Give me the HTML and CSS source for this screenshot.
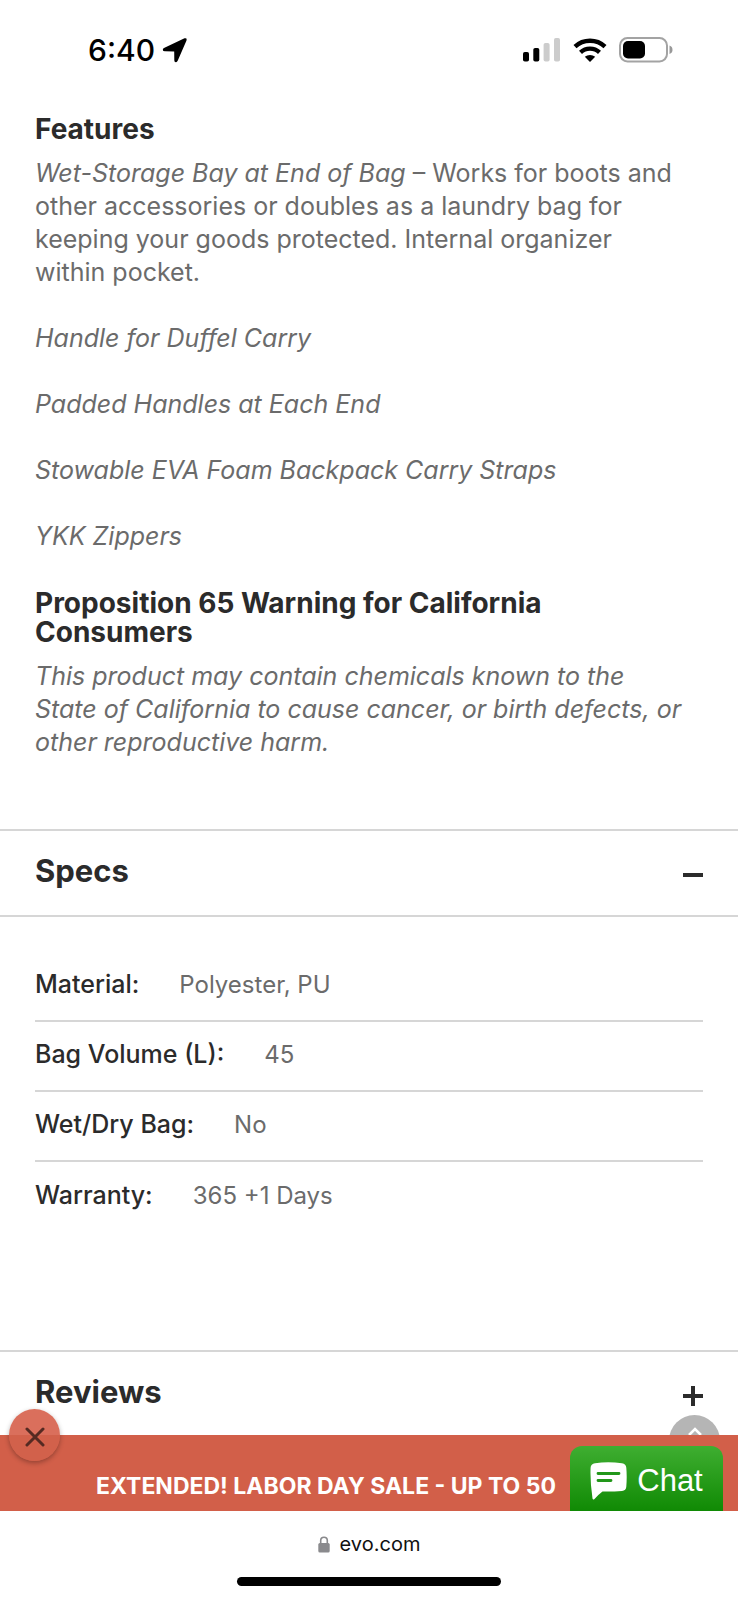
FILE: index.html
```html
<!DOCTYPE html>
<html lang="en">
<head>
    <meta charset="UTF-8">
    <meta name="viewport" content="width=device-width, initial-scale=1.0">
    <title>evo.com</title>
    <link rel="stylesheet" href="styles.css">
</head>
<body>

<header class="status-bar">
    <div class="status-time">
        <span>6:40</span>
        <svg width="26" height="26" viewBox="0 0 26 26"><path d="M2.500 10.800 22.500 1.300q3-.8 2 2.200L15.800 23.500q-.8 2-2 1.800-1.500 0-1.500-2L12.200 14.500 3 14.300q-2.200 0-2.200-1.500 0-1.300 1.700-2z"/></svg>
    </div>
    <div class="status-icons">
        <svg width="38" height="24" viewBox="0 0 38 24">
            <rect x="0" y="14" width="6" height="9.500" rx="1.800"/>
            <rect x="10.300" y="10" width="6" height="13.500" rx="1.800"/>
            <rect x="20.600" y="5" width="6" height="18.500" rx="1.800" fill="#ccc"/>
            <rect x="31" y="0" width="6" height="23.500" rx="1.800" fill="#ccc"/>
        </svg>
        <svg width="34" height="24" viewBox="0 0 34 24">
            <path d="M2 8.600a22 22 0 0 1 30 0M7.500 14.300a14 14 0 0 1 19 0" fill="none" stroke="#000" stroke-width="4.400"/>
            <path d="M17 24l-5.200-5.200a8 8 0 0 1 10.400 0z"/>
        </svg>
        <svg width="54" height="26" viewBox="0 0 54 26">
            <rect x="1" y="1" width="47" height="23.500" rx="7.500" fill="none" stroke="#a3a3a3" stroke-width="2"/>
            <rect x="4" y="4" width="22" height="17.500" rx="5"/>
            <path d="M50.500 8.500q3 1 3 4.200t-3 4.200z" fill="#999"/>
        </svg>
    </div>
</header>

<main>
    <section class="details">
        <h3>Features</h3>
        <p><em>Wet-Storage Bay at End of Bag</em> – Works for boots and<br>other accessories or doubles as a laundry bag for<br>keeping your goods protected. Internal organizer<br>within pocket.</p>
        <p><em>Handle for Duffel Carry</em></p>
        <p><em>Padded Handles at Each End</em></p>
        <p><em>Stowable EVA Foam Backpack Carry Straps</em></p>
        <p><em>YKK Zippers</em></p>
        <h3>Proposition 65 Warning for California<br>Consumers</h3>
        <p><em>This product may contain chemicals known to the<br>State of California to cause cancer, or birth defects, or<br>other reproductive harm.</em></p>
    </section>

    <section>
        <h2 class="accordion">
            <button type="button" aria-expanded="true">
                <span>Specs</span>
                <svg class="toggle" width="20" height="20" viewBox="0 0 20 20"><path d="M0 10h20"/></svg>
            </button>
        </h2>
        <table class="specs">
            <tbody>
                <tr><th scope="row">Material:</th><td>Polyester, PU</td></tr>
                <tr><th scope="row">Bag Volume (L):</th><td>45</td></tr>
                <tr><th scope="row">Wet/Dry Bag:</th><td>No</td></tr>
                <tr><th scope="row">Warranty:</th><td>365 +1 Days</td></tr>
            </tbody>
        </table>
    </section>

    <section>
        <h2 class="accordion reviews">
            <button type="button" aria-expanded="false">
                <span>Reviews</span>
                <svg class="toggle" width="20" height="20" viewBox="0 0 20 20"><path d="M0 10h20M10 0v20"/></svg>
            </button>
        </h2>
    </section>
</main>

<div class="bottom">
    <button type="button" class="to-top" aria-label="Back to top">
        <svg width="16" height="10" viewBox="0 0 16 10"><path d="M2 8l6-6 6 6" fill="none" stroke="#fff" stroke-width="2.500"/></svg>
    </button>
    <div class="banner">
        <a href="#sale">EXTENDED! LABOR DAY SALE - UP TO 50</a>
        <button type="button" class="close" aria-label="Close">
            <svg width="20" height="20" viewBox="0 0 20 20"><path d="M2 2l16 16M18 2L2 18" stroke="#552a22" stroke-width="3" stroke-linecap="round"/></svg>
        </button>
        <button type="button" class="chat">
            <svg width="37" height="38" viewBox="0 0 37 38">
                <path d="M5 1.200Q18-.6 32 1.200q4 .5 4.300 4.500.8 9 0 19-.3 3.800-4.300 4.200-9 .8-19.500.6Q9 32 4.500 37q-1.500 1.300-2-.6Q0 20 .6 5.700.8 1.700 5 1.200z" fill="#fff"/>
                <path d="M8 11.500h21M8 18.500h13" stroke="#22971a" stroke-width="2.800" stroke-linecap="round"/>
            </svg>
            <span>Chat</span>
        </button>
    </div>
    <footer class="browser-bar">
        <div class="address">
            <svg width="12" height="17" viewBox="0 0 12 17">
                <path d="M2.700 8V4.500a3.300 3.300 0 0 1 6.600 0V8" fill="none" stroke="#8a8a8d" stroke-width="1.600"/>
                <rect x=".3" y="7" width="11.400" height="9.500" rx="1.500" fill="#8a8a8d"/>
            </svg>
            <span>evo.com</span>
        </div>
        <div class="home-bar"></div>
    </footer>
</div>

</body>
</html>
```
FILE: styles.css
```css
* {
    box-sizing: border-box;
}
body {
    margin: 0;
    background-color: #fff;
    color: #6b6b6b;
    font-family: Inter, "Liberation Sans", sans-serif;
    font-size: 25px;
    line-height: 33px;
}
button {
    border: none;
    padding: 0;
    background: none;
    color: inherit;
    font: inherit;
    cursor: pointer;
}
svg {
    display: block;
}

/* Status bar */
.status-bar {
    display: flex;
    justify-content: space-between;
    height: 115px;
    padding: 33px 65px 0 88px;
    color: #000;
}
.status-time {
    display: flex;
    align-items: center;
    gap: 7px;
    height: 34px;
    font-size: 30px;
    font-weight: 500;
}
.status-icons {
    display: flex;
    align-items: center;
    gap: 12px;
    height: 34px;
}

/* Product details */
.details {
    padding: 0 20px 70px 35px;
}
h3 {
    margin: 0 0 13px;
    color: #2b2b2b;
    font-size: 28px;
    font-weight: 700;
    line-height: 29px;
}
p {
    margin: 0 0 33px;
}
p + h3 {
    margin-top: 36px;
}
.details p:last-child {
    margin-bottom: 0;
}

/* Accordion rows */
.accordion {
    margin: 0;
    border-top: 2px solid #d6d6d6;
    border-bottom: 2px solid #d6d6d6;
}
.accordion button {
    display: flex;
    align-items: center;
    justify-content: space-between;
    width: 100%;
    height: 84px;
    padding: 0 35px 6px;
    color: #2b2b2b;
    font-size: 31px;
    font-weight: 700;
}
.toggle {
    margin-top: 10px;
    fill: none;
    stroke: #2b2b2b;
    stroke-width: 4;
}
.reviews {
    border-bottom: none;
}

/* Specs table */
.specs {
    display: block;
    padding: 35px 35px 118px;
}
.specs tbody {
    display: block;
}
.specs tr {
    display: flex;
    align-items: center;
    gap: 40px;
    height: 70px;
    border-bottom: 2px solid #d6d6d6;
}
.specs tr:last-child {
    border-bottom: none;
}
.specs th,
.specs td {
    padding: 0 0 4px;
}
.specs th {
    color: #2b2b2b;
    font-weight: 500;
}
.specs td {
    font-size: 24px;
}

/* Fixed bottom area */
.bottom {
    position: fixed;
    right: 0;
    bottom: 0;
    left: 0;
}
.to-top {
    position: absolute;
    top: -20px;
    right: 18px;
    width: 51px;
    height: 51px;
    border-radius: 50%;
    background-color: #b5b5b5;
}
.to-top svg {
    margin: -14px auto 0;
}
.banner {
    position: relative;
    height: 76px;
    padding: 34px 0 0 96px;
    background-color: #d25f49;
}
.banner a {
    color: #fff;
    font-size: 23px;
    font-weight: 700;
    text-decoration: none;
    white-space: nowrap;
}
.close {
    position: absolute;
    top: -26px;
    left: 9px;
    display: grid;
    place-items: center;
    width: 51px;
    height: 52px;
    padding-top: 4px;
    border-radius: 50%;
    background: linear-gradient(#da6f5c 50%, #d2614b 50%);
    box-shadow: 0 2px 5px rgba(0, 0, 0, 0.3);
}
.chat {
    position: absolute;
    right: 15px;
    bottom: 0;
    display: flex;
    align-items: center;
    justify-content: center;
    gap: 10px;
    width: 153px;
    height: 65px;
    padding-top: 4px;
    border-radius: 12px 12px 0 0;
    background: linear-gradient(#3fae31, #108a04);
    color: #fff;
    font-family: "Liberation Sans", sans-serif;
    font-size: 31px;
}

/* Browser bar */
.browser-bar {
    height: 89px;
    padding-top: 17px;
    background-color: #fff;
    color: #111;
    font-size: 20px;
}
.address {
    display: flex;
    align-items: center;
    justify-content: center;
    gap: 10px;
}
.home-bar {
    width: 264px;
    height: 9px;
    margin: 16px auto 0;
    border-radius: 5px;
    background-color: #000;
}
```
